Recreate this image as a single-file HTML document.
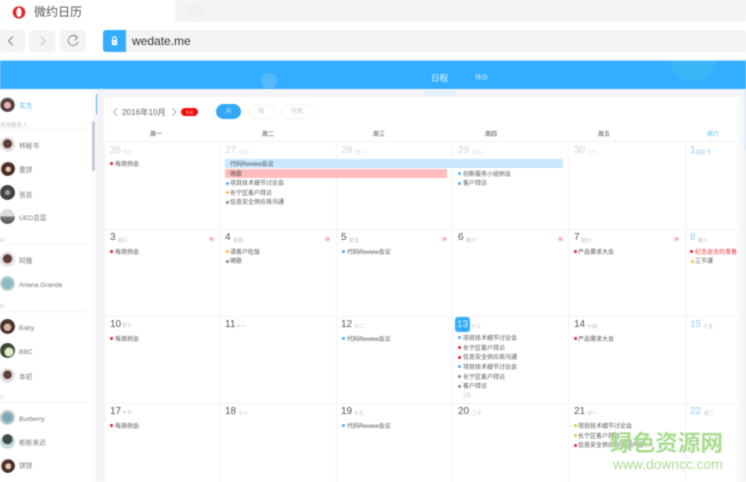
<!DOCTYPE html>
<html lang="zh">
<head>
<meta charset="utf-8">
<title>微约日历</title>
<style>
html,body{margin:0;padding:0;background:#fff}
body{width:746px;height:482px;overflow:hidden;position:relative;font-family:"Liberation Sans","Noto Sans CJK SC",sans-serif}
#p{position:absolute;left:0;top:0;width:746px;height:482px;overflow:hidden;filter:blur(.45px)}
#p div{position:absolute;white-space:nowrap}
.b{border-radius:3px;background:#f4f4f6}
.gv{width:1px;top:141px;height:341px;background:#f1f4f8}
.gh{left:104px;width:642px;height:1px;background:#f1f4f8}
.w{top:131px;font-size:6px;line-height:9px;color:#444}
.n{font-size:10px;line-height:12px;color:#555}
.n.m{color:#cdd3dc}
.n.s{color:#8fcdfb}
.l{font-size:5px;line-height:8px;color:#b5b5b5;margin-top:1px}
.e{font-size:6px;line-height:9px;color:#555;margin-top:2px}
.d{width:2.8px;height:2.8px;border-radius:50%}
.re{background:#e5252a}.bl{background:#4db1f3}.ye{background:#f9bc42}.gr{background:#888}
.x{font-size:5px;line-height:7px;color:#ee6b6b;margin-top:1px}
.c{font-size:6.7px;line-height:9px;color:#777;left:19px;margin-top:2px}
.h{font-size:5.6px;line-height:8px;color:#c2c2c2;left:0;margin-top:2px}
.ln{left:0;width:87px;height:1px;background:#f2f3f5}
.av{left:0;width:15px;height:15px;border-radius:50%}
</style>
</head>
<body>
<div id="p">
<!-- browser chrome -->
<div style="left:175px;top:0;width:571px;height:22px;background:#f4f4f6"></div>
<div style="left:187px;top:3px;width:15px;height:14px;background:#f1f0f2"></div>
<svg style="position:absolute;left:12px;top:6px" width="14" height="13" viewBox="0 0 14 13"><path fill-rule="evenodd" fill="#e4252f" d="M7 .3C10.6.3 13.3 3 13.3 6.4S10.6 12.6 7 12.6.7 9.8.7 6.4 3.4.3 7 .3ZM7 1.8C5.4 1.8 4.4 3.8 4.4 6.4S5.4 11 7 11 9.6 9 9.6 6.4 8.6 1.8 7 1.8Z"/></svg>
<div style="left:34px;top:4px;font-size:12px;line-height:17px;color:#555">微约日历</div>

<div class="b" style="left:-4px;top:30px;width:29px;height:22px"></div>
<div class="b" style="left:29px;top:30px;width:26px;height:22px"></div>
<div class="b" style="left:60px;top:30px;width:26px;height:22px"></div>
<svg style="position:absolute;left:0;top:30px" width="90" height="22" viewBox="0 0 90 22" fill="none" stroke-linecap="round" stroke-linejoin="round">
<path d="M12.5 7 8.5 11 12.5 15" stroke="#888" stroke-width="1.1"/>
<path d="M41 7 45 11 41 15" stroke="#c4c4c4" stroke-width="1"/>
<path d="M77 7.2A5 5 0 1 0 78 12" stroke="#888" stroke-width=".9"/>
<path d="M74.5 5 77.6 7.4 75 10" stroke="#888" stroke-width=".9"/>
</svg>
<div style="left:103px;top:30px;width:643px;height:22px;background:#f4f4f6;border-radius:3px 0 0 3px"></div>
<div style="left:103px;top:30px;width:23px;height:22px;background:#35adff;border-radius:3px 0 0 3px"></div>
<svg style="position:absolute;left:111px;top:36px" width="7" height="10" viewBox="0 0 7 10"><path d="M1.6 4.5V2.8a1.9 1.9 0 0 1 3.8 0V4.5" fill="none" stroke="#fff" stroke-width="1.2"/><rect x=".8" y="4" width="5.4" height="5.2" rx="1.4" fill="#fff"/><circle cx="3.5" cy="6.4" r=".7" fill="#35adff"/></svg>
<div style="left:132px;top:33px;font-size:12px;line-height:16px;color:#333">wedate.me</div>

<!-- blue header -->
<div style="left:0;top:60px;width:746px;height:30px;background:#33adff;border-top:1px solid #a6dcff;box-sizing:border-box;overflow:hidden">
<div style="left:261px;top:12px;width:16px;height:16px;border-radius:50%;background:#56b9fb"></div>
<div style="left:669px;top:-28px;width:48px;height:48px;border-radius:50%;background:#3ab6f6"></div>
<div style="left:431px;top:12px;font-size:8.5px;line-height:11px;color:#e4f4ff">日程</div>
<div style="left:475px;top:12px;font-size:6.5px;line-height:9px;color:#cfeaff">待办</div>
<div style="left:423px;top:28px;width:34px;height:1px;background:#dff2ff"></div>
</div>
<div style="left:0;top:89px;width:746px;height:8px;background:#f4f4f8"></div>
<div style="left:423px;top:90px;width:34px;height:6px;background:#e4f1fc"></div>

<!-- sidebar -->
<div style="left:0;top:90px;width:92px;height:392px;background:#fff"></div>
<div style="left:92px;top:90px;width:5px;height:392px;background:#fafafc"></div>
<div style="left:97px;top:90px;width:7px;height:392px;background:#f4f4f8"></div>
<div style="left:96px;top:94px;width:1px;height:20px;background:#49b3f8"></div>
<div style="left:92px;top:121px;width:3px;height:50px;background:#c3c8d1;border-radius:2px"></div>

<div class="av" style="top:97px;background:radial-gradient(circle at 50% 55%,#e8b9b5 0 28%,#5b4040 32% 62%,#b8d0c8 66%)"></div>
<div class="c" style="top:100px;color:#53b5f7">东方</div>
<div class="h" style="top:120px">常用联系人</div><div class="ln" style="top:129px"></div>
<div class="av" style="top:137px;background:radial-gradient(circle at 50% 45%,#5b3f38 0 38%,#e3d6d2 42%,#e4e6ec 70%)"></div>
<div class="c" style="top:140px">林秘书</div>
<div class="av" style="top:161px;background:radial-gradient(circle at 55% 55%,#e9c5b5 0 20%,#4a2f28 26% 58%,#dfe3da 62%)"></div>
<div class="c" style="top:164px">董饼</div>
<div class="av" style="top:185px;background:radial-gradient(circle at 50% 50%,#999 0 22%,#444 28% 70%,#777 74%)"></div>
<div class="c" style="top:189px">张总</div>
<div class="av" style="top:209px;background:linear-gradient(180deg,#ddd 0 45%,#777 55%,#555 100%)"></div>
<div class="c" style="top:212px">UED总监</div>
<div class="h" style="top:235px">A</div><div class="ln" style="top:244px"></div>
<div class="av" style="top:252px;background:radial-gradient(circle at 50% 45%,#5b3f38 0 38%,#e3d6d2 42%,#e4e6ec 70%)"></div>
<div class="c" style="top:255px">阿雅</div>
<div class="av" style="top:276px;background:radial-gradient(circle at 50% 50%,#8fb8c0 0 40%,#c6d9da 70%)"></div>
<div class="c" style="top:279px">Ariana Grande</div>
<div class="h" style="top:301px">B</div><div class="ln" style="top:311px"></div>
<div class="av" style="top:319px;background:radial-gradient(circle at 50% 55%,#d8b5a5 0 30%,#4b3530 36% 100%)"></div>
<div class="c" style="top:322px">Baby</div>
<div class="av" style="top:343px;background:radial-gradient(circle at 60% 60%,#e4ebc8 0 30%,#3c4a35 40% 100%)"></div>
<div class="c" style="top:346px">BBC</div>
<div class="av" style="top:368px;background:radial-gradient(circle at 50% 45%,#5b3f38 0 36%,#e3d6d2 40%,#e4e6ec 70%)"></div>
<div class="c" style="top:371px">本初</div>
<div class="h" style="top:392px">C</div><div class="ln" style="top:402px"></div>
<div class="av" style="top:410px;background:radial-gradient(circle at 50% 50%,#7fa5b8 0 36%,#c0cfc9 60%)"></div>
<div class="c" style="top:413px">Burberry</div>
<div class="av" style="top:434px;background:radial-gradient(circle at 50% 35%,#3d4a48 0 36%,#c9dde0 46%)"></div>
<div class="c" style="top:437px">彬彬来迟</div>
<div class="av" style="top:458px;background:radial-gradient(circle at 55% 55%,#e9c5b5 0 22%,#4a2f28 28% 56%,#e5dcd8 60%)"></div>
<div class="c" style="top:460px">饼饼</div>

<!-- toolbar -->
<svg style="position:absolute;left:110px;top:106px" width="70" height="12" viewBox="0 0 70 12" fill="none" stroke="#9a9a9a" stroke-width=".8" stroke-linecap="round" stroke-linejoin="round"><path d="M7 2.5 3.5 6 7 9.5"/><path stroke="#8a9aaa" d="M62.5 2.5 66 6 62.5 9.5"/></svg>
<div style="left:122px;top:107px;font-size:8.2px;line-height:12px;color:#666">2016年10月</div>
<div style="left:181px;top:108px;width:17px;height:8px;border-radius:4px;background:#f30d0d;color:#ffc9c9;font-size:4px;line-height:9px;text-align:center">今天</div>
<div style="left:216px;top:104px;width:25px;height:15px;border-radius:8px;background:#33a9f5;color:#cbe9ff;font-size:6px;line-height:17px;text-align:center">月</div>
<div style="left:248px;top:104px;width:26px;height:15px;box-sizing:border-box;border:1px solid #f2f3f5;border-radius:8px;color:#c4c4c4;font-size:6px;line-height:15px;text-align:center">周</div>
<div style="left:281px;top:104px;width:32px;height:15px;box-sizing:border-box;border:1px solid #f2f3f5;border-radius:8px;color:#c4c4c4;font-size:6px;line-height:15px;text-align:center">列表</div>

<!-- weekdays -->
<div class="w" style="left:150px">周一</div>
<div class="w" style="left:262px">周二</div>
<div class="w" style="left:373px">周三</div>
<div class="w" style="left:485px">周四</div>
<div class="w" style="left:598px">周五</div>
<div class="w" style="left:707px;color:#62baf8">周六</div>

<!-- grid -->
<div class="gh" style="top:141px"></div>
<div class="gh" style="top:229px"></div>
<div class="gh" style="top:316px"></div>
<div class="gh" style="top:403px"></div>
<div class="gv" style="left:104px"></div>
<div class="gv" style="left:220px"></div>
<div class="gv" style="left:336px"></div>
<div class="gv" style="left:452px"></div>
<div class="gv" style="left:568px"></div>
<div class="gv" style="left:685px"></div>

<!-- row 1 -->
<div class="n m" style="left:110px;top:145px">26</div><div class="l" style="left:123px;top:148px;color:#cdd3dc">廿六</div>
<div class="n m" style="left:225px;top:145px">27</div><div class="l" style="left:239px;top:148px;color:#cdd3dc">廿七</div>
<div class="n m" style="left:341px;top:145px">28</div><div class="l" style="left:355px;top:148px;color:#cdd3dc">廿八</div>
<div class="n m" style="left:458px;top:145px">29</div><div class="l" style="left:472px;top:148px;color:#cdd3dc">廿九</div>
<div class="n m" style="left:574px;top:145px">30</div><div class="l" style="left:587px;top:148px;color:#cdd3dc">三十</div>
<div class="n s" style="left:690px;top:145px">1</div><div class="l" style="left:696px;top:148px;color:#8fcdfb">国庆节</div>

<div class="d re" style="left:110px;top:162px"></div><div class="e" style="left:115px;top:159px">每周例会</div>
<div style="left:225px;top:159px;width:338px;height:9px;background:#c9e7fd"></div>
<div class="e" style="left:230px;top:159px">代码Review会议</div>
<div style="left:225px;top:169px;width:222px;height:9px;background:#ffbcbc"></div>
<div class="e" style="left:230px;top:169px">嗝歌</div>
<div class="d bl" style="left:226px;top:182px"></div><div class="e" style="left:230px;top:178px">项目技术细节讨论会</div>
<div class="d ye" style="left:226px;top:191px"></div><div class="e" style="left:230px;top:188px">长宁区客户拜访</div>
<div class="d gr" style="left:226px;top:201px"></div><div class="e" style="left:230px;top:197px">信息安全供应商沟通</div>
<div class="d bl" style="left:458px;top:172px"></div><div class="e" style="left:463px;top:169px">创新服务小组例会</div>
<div class="d bl" style="left:458px;top:182px"></div><div class="e" style="left:463px;top:178px">客户拜访</div>

<!-- row 2 -->
<div class="n" style="left:110px;top:232px">3</div><div class="l" style="left:118px;top:236px">初三</div><div class="x" style="left:209px;top:236px">休</div>
<div class="n" style="left:225px;top:232px">4</div><div class="l" style="left:233px;top:236px">初四</div><div class="x" style="left:325px;top:236px">休</div>
<div class="n" style="left:341px;top:232px">5</div><div class="l" style="left:349px;top:236px">初五</div><div class="x" style="left:442px;top:236px">休</div>
<div class="n" style="left:458px;top:232px">6</div><div class="l" style="left:466px;top:236px">初六</div><div class="x" style="left:558px;top:236px">休</div>
<div class="n" style="left:574px;top:232px">7</div><div class="l" style="left:581px;top:236px">初七</div><div class="x" style="left:674px;top:236px">休</div>
<div class="n s" style="left:690px;top:232px">8</div><div class="l" style="left:698px;top:236px">初八</div>

<div class="d re" style="left:110px;top:250px"></div><div class="e" style="left:115px;top:247px">每周例会</div>
<div class="d ye" style="left:226px;top:250px"></div><div class="e" style="left:230px;top:247px">请客户吃饭</div>
<div class="d gr" style="left:226px;top:260px"></div><div class="e" style="left:230px;top:256px">嗝歌</div>
<div class="d bl" style="left:342px;top:250px"></div><div class="e" style="left:347px;top:247px">代码Review会议</div>
<div class="d re" style="left:574px;top:250px"></div><div class="e" style="left:578px;top:247px">产品需求大会</div>
<div class="d re" style="left:690px;top:250px;width:3.4px"></div><div class="e" style="left:695px;top:247px;color:#ec3a3f">纪念逝去的青春</div>
<div class="d ye" style="left:691px;top:260px"></div><div class="e" style="left:695px;top:256px">三节课</div>

<!-- row 3 -->
<div class="n" style="left:110px;top:319px">10</div><div class="l" style="left:122px;top:321px">初十</div>
<div class="n" style="left:225px;top:319px">11</div><div class="l" style="left:236px;top:322px">十一</div>
<div class="n" style="left:341px;top:319px">12</div><div class="l" style="left:354px;top:322px">十二</div>
<div style="left:455px;top:317px;width:15px;height:15px;border-radius:3px;background:#35adff;color:#cfeaff;font-size:10px;line-height:15px;text-align:center">13</div><div class="l" style="left:471px;top:322px">十三</div>
<div class="n" style="left:574px;top:319px">14</div><div class="l" style="left:587px;top:322px">十四</div>
<div class="n s" style="left:690px;top:319px">15</div><div class="l" style="left:703px;top:322px">十五</div>

<div class="d re" style="left:110px;top:337px"></div><div class="e" style="left:115px;top:334px">每周例会</div>
<div class="d bl" style="left:342px;top:337px"></div><div class="e" style="left:347px;top:334px">代码Review会议</div>
<div class="d bl" style="left:458px;top:336px"></div><div class="e" style="left:463px;top:333px">项目技术细节讨论会</div>
<div class="d re" style="left:458px;top:346px"></div><div class="e" style="left:463px;top:343px">长宁区客户拜访</div>
<div class="d re" style="left:458px;top:356px"></div><div class="e" style="left:463px;top:352px">信息安全供应商沟通</div>
<div class="d bl" style="left:458px;top:365px"></div><div class="e" style="left:463px;top:362px">项目技术细节讨论会</div>
<div class="d gr" style="left:458px;top:375px"></div><div class="e" style="left:463px;top:372px">长宁区客户拜访</div>
<div class="d gr" style="left:458px;top:385px"></div><div class="e" style="left:463px;top:381px">客户拜访</div>
<div class="l" style="left:463px;top:391px;color:#c9c9c9">3项...</div>
<div class="d re" style="left:574px;top:337px"></div><div class="e" style="left:578px;top:334px">产品需求大会</div>

<!-- row 4 -->
<div class="n" style="left:110px;top:406px">17</div><div class="l" style="left:122px;top:408px">十七</div>
<div class="n" style="left:225px;top:406px">18</div><div class="l" style="left:238px;top:409px">十八</div>
<div class="n" style="left:341px;top:406px">19</div><div class="l" style="left:354px;top:409px">十九</div>
<div class="n" style="left:458px;top:406px">20</div><div class="l" style="left:472px;top:409px">二十</div>
<div class="n" style="left:574px;top:406px">21</div><div class="l" style="left:587px;top:409px">廿一</div>
<div class="n s" style="left:690px;top:406px">22</div><div class="l" style="left:704px;top:409px">廿二</div>

<div class="d re" style="left:110px;top:424px"></div><div class="e" style="left:115px;top:421px">每周例会</div>
<div class="d bl" style="left:342px;top:424px"></div><div class="e" style="left:347px;top:421px">代码Review会议</div>
<div class="d ye" style="left:574px;top:424px"></div><div class="e" style="left:578px;top:421px">项目技术细节讨论会</div>
<div class="d ye" style="left:574px;top:434px"></div><div class="e" style="left:578px;top:431px">长宁区客户拜访</div>
<div class="d re" style="left:574px;top:444px"></div><div class="e" style="left:578px;top:440px">信息安全供应商沟通内容...</div>

<!-- right fade -->
<div style="left:735px;top:97px;width:11px;height:385px;background:linear-gradient(90deg,rgba(240,240,244,0),rgba(238,238,242,.75))"></div>
<div style="left:745px;top:90px;width:1px;height:60px;background:#c6e4fa"></div>

<!-- watermark -->
<div style="left:610px;top:430px;font-size:22.6px;line-height:27px;font-weight:bold;color:#a7dc8e">绿色资源网</div>
<div style="left:613px;top:455px;font-size:13.8px;line-height:20px;color:#abdc94">www.downcc.com</div>
</div>
</body>
</html>
